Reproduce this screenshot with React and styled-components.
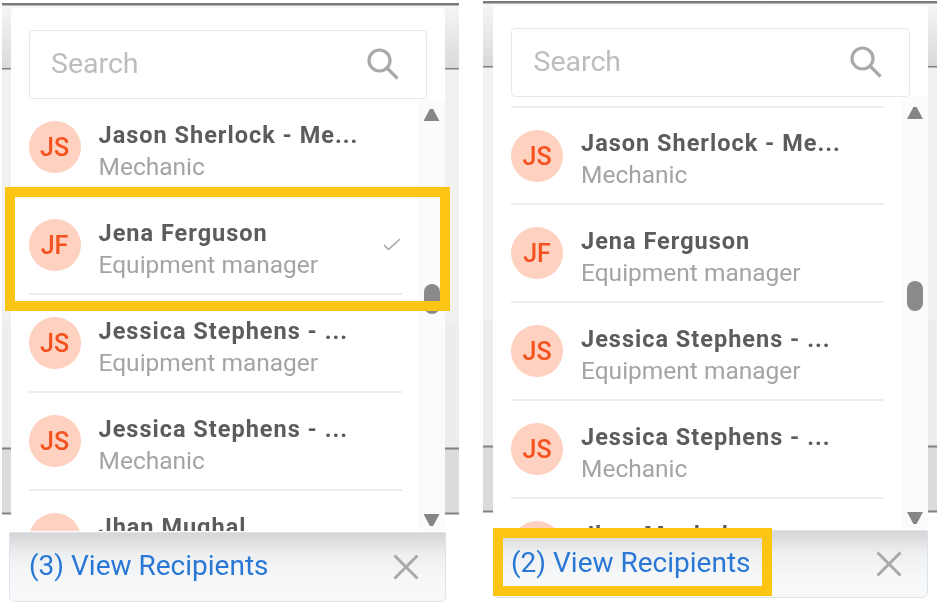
import React from "react";
import styled, { createGlobalStyle } from "styled-components";

const GlobalStyle = createGlobalStyle`
  html, body {
    margin: 0;
    padding: 0;
    background: #fff;
    font-family: Roboto, "Liberation Sans", sans-serif;
  }
`;

const Page = styled.div`
  width: 937px;
  height: 604px;
  overflow: hidden;
  display: flex;
  align-items: flex-start;
  gap: 24px;
  padding-left: 2px;
  box-sizing: border-box;
`;

const Panel = styled.section`
  position: relative;
  width: ${(p) => p.$width}px;
  height: 600px;
  margin-top: ${(p) => p.$top}px;
  padding: 5px 0 0 ${(p) => p.$inset}px;
  box-sizing: border-box;
  filter: blur(0.4px);
  background: linear-gradient(
    to bottom,
    #7a7a7a 0,
    #7a7a7a 2px,
    #f6f6f6 3px,
    #d9d9d9 65px,
    #808080 65px,
    #808080 66px,
    #f1f1f1 67px,
    #f1f1f1 318px,
    #ededed 319px,
    #ededed 444px,
    #808080 445px,
    #808080 446px,
    #dcdcdc 447px,
    #dcdcdc 509px,
    #808080 510px,
    #808080 511px,
    #fff 512px,
    #fff 100%
  );
`;

const Card = styled.div`
  display: flex;
  flex-direction: column;
  width: ${(p) => p.$width}px;
  height: 523px;
  padding: 22px 0 0 18px;
  box-sizing: border-box;
  background: #fff;
  border-radius: 4px 4px 0 0;
  overflow: hidden;
`;

const SearchBox = styled.div`
  display: flex;
  align-items: center;
  justify-content: space-between;
  flex: none;
  width: calc(100% - 18px);
  height: 69px;
  padding: 0 27px 2px 21.5px;
  box-sizing: border-box;
  border: 1px solid #e3e9f1;
  border-radius: 4px;
  font-size: 28.5px;
  color: #bdbdbd;
`;

const Body = styled.div`
  display: flex;
  flex: 1;
  min-height: 0;
  justify-content: space-between;
`;

const List = styled.div`
  width: 373px;
  padding-top: ${(p) => (p.$offset ? 10 : 0)}px;
  overflow: hidden;
`;

const Row = styled.div`
  display: flex;
  align-items: center;
  gap: 18px;
  height: 98px;
  box-sizing: border-box;
  border-bottom: 2px solid #e9eef4;
  &:first-child {
    border-top: ${(p) => (p.$ruled ? "2px solid #e9eef4" : "0")};
    height: ${(p) => (p.$ruled ? 99 : 98)}px;
    margin-top: ${(p) => (p.$ruled ? -1 : 0)}px;
  }
`;

const Avatar = styled.div`
  flex: none;
  width: 52px;
  height: 52px;
  border-radius: 50%;
  background: #ffd1c0;
  color: #f4511e;
  font-size: 25px;
  font-weight: 500;
  line-height: 53px;
  text-align: center;
`;

const Info = styled.div`
  flex: 1;
  min-width: 0;
  padding-top: 6px;
`;

const Name = styled.div`
  font-size: 23.5px;
  line-height: 32px;
  font-weight: 700;
  letter-spacing: 1px;
  color: #5c5c5c;
  white-space: nowrap;
`;

const Role = styled.div`
  font-size: 24.5px;
  line-height: 31px;
  color: #a4a4a4;
  white-space: nowrap;
`;

const Tick = styled.svg`
  flex: none;
  width: 18px;
  height: 12px;
  margin: 0 1px 3px 0;
  fill: none;
  stroke: #a8a8a8;
  stroke-width: 1.6;
`;

const ScrollTrack = styled.div`
  position: relative;
  flex: none;
  width: 27px;
  background: #fbfbfb;
`;

const Arrow = styled.div`
  position: absolute;
  left: 6px;
  ${(p) => (p.$down ? "bottom: 5px;" : "top: 10px;")}
  width: 16px;
  height: 12px;
  background: #868686;
  clip-path: ${(p) =>
    p.$down
      ? "polygon(0 0, 100% 0, 60% 100%, 40% 100%)"
      : "polygon(40% 0, 60% 0, 100% 100%, 0 100%)"};
`;

const Thumb = styled.div`
  position: absolute;
  left: 6px;
  top: ${(p) => p.$top}px;
  width: 16px;
  height: 30px;
  border-radius: 8px;
  background: #8a8a8a;
`;

const Footer = styled.div`
  display: flex;
  align-items: center;
  justify-content: space-between;
  width: ${(p) => p.$width}px;
  height: ${(p) => p.$height}px;
  margin: 1px 0 0 ${(p) => p.$shift}px;
  padding: 0 ${(p) => p.$end}px 0 ${(p) => p.$pad}px;
  box-sizing: border-box;
  border: 1px solid #dfe3e8;
  border-radius: 0 0 5px 5px;
  background: linear-gradient(to bottom, #d6d6d8 0, #eeeff1 22px, #f6f7f9 44px, #f8f9fb 100%);
`;

const RecipientsLink = styled.a`
  margin-bottom: 3px;
  font-size: 28px;
  color: #2a78d6;
  text-decoration: none;
`;

const CloseIcon = styled.svg`
  width: 26px;
  height: 26px;
  fill: none;
  stroke: #a9a9a9;
  stroke-width: 3;
`;

const SearchIcon = styled.svg`
  width: 32px;
  height: 32px;
  fill: none;
  stroke: #a9a9a9;
  stroke-width: 3.2;
`;

const Highlight = styled.div`
  position: absolute;
  left: ${(p) => p.$x}px;
  top: ${(p) => p.$y}px;
  width: ${(p) => p.$w}px;
  height: ${(p) => p.$h}px;
  box-sizing: border-box;
  border: 10px solid #fdc513;
`;

const people = [
  { initials: "JS", name: "Jason Sherlock - Me...", role: "Mechanic" },
  { initials: "JF", name: "Jena Ferguson", role: "Equipment manager" },
  { initials: "JS", name: "Jessica Stephens - ...", role: "Equipment manager" },
  { initials: "JS", name: "Jessica Stephens - ...", role: "Mechanic" },
  { initials: "", name: "Jhan Mughal", role: "" },
];

const Recipients = ({ width, cardWidth, top, inset, thumbTop, offset, count, checked, footer, children }) => (
  <Panel $width={width} $top={top} $inset={inset}>
    <Card $width={cardWidth}>
      <SearchBox>
        <span>Search</span>
        <SearchIcon viewBox="0 0 32 32">
          <circle cx="12.5" cy="12.5" r="10.5" />
          <path d="M20 20l10.5 10.5" />
        </SearchIcon>
      </SearchBox>
      <Body>
        <List $offset={offset}>
          {people.map((person, i) => (
            <Row key={i} $ruled={offset}>
              <Avatar>{person.initials}</Avatar>
              <Info>
                <Name>{person.name}</Name>
                <Role>{person.role || "\u00a0"}</Role>
              </Info>
              {checked === i && (
                <Tick viewBox="0 0 18 12">
                  <path d="M1 7l4.5 4.5L17 1" />
                </Tick>
              )}
            </Row>
          ))}
        </List>
        <ScrollTrack>
          <Arrow />
          <Thumb $top={thumbTop} />
          <Arrow $down />
        </ScrollTrack>
      </Body>
    </Card>
    <Footer {...footer}>
      <RecipientsLink>({count}) View Recipients</RecipientsLink>
      <CloseIcon viewBox="0 0 26 26">
        <path d="M1.5 1.5l23 23M24.5 1.5l-23 23" />
      </CloseIcon>
    </Footer>
    {children}
  </Panel>
);

export default function App() {
  return (
    <Page>
      <GlobalStyle />
      <Recipients
        width={457}
        cardWidth={434}
        top={3}
        inset={8.5}
        thumbTop={185}
        count={3}
        checked={1}
        footer={{ $width: 437, $height: 70, $shift: -1.5, $pad: 19, $end: 26 }}
      >
        <Highlight $x={3} $y={184} $w={445} $h={124} />
      </Recipients>
      <Recipients
        width={454}
        cardWidth={435}
        top={1}
        inset={10}
        thumbTop={184}
        offset
        count={2}
        footer={{ $width: 435, $height: 68, $shift: 0, $pad: 17, $end: 25 }}
      >
        <Highlight $x={10} $y={527} $w={279} $h={68} />
      </Recipients>
    </Page>
  );
}
